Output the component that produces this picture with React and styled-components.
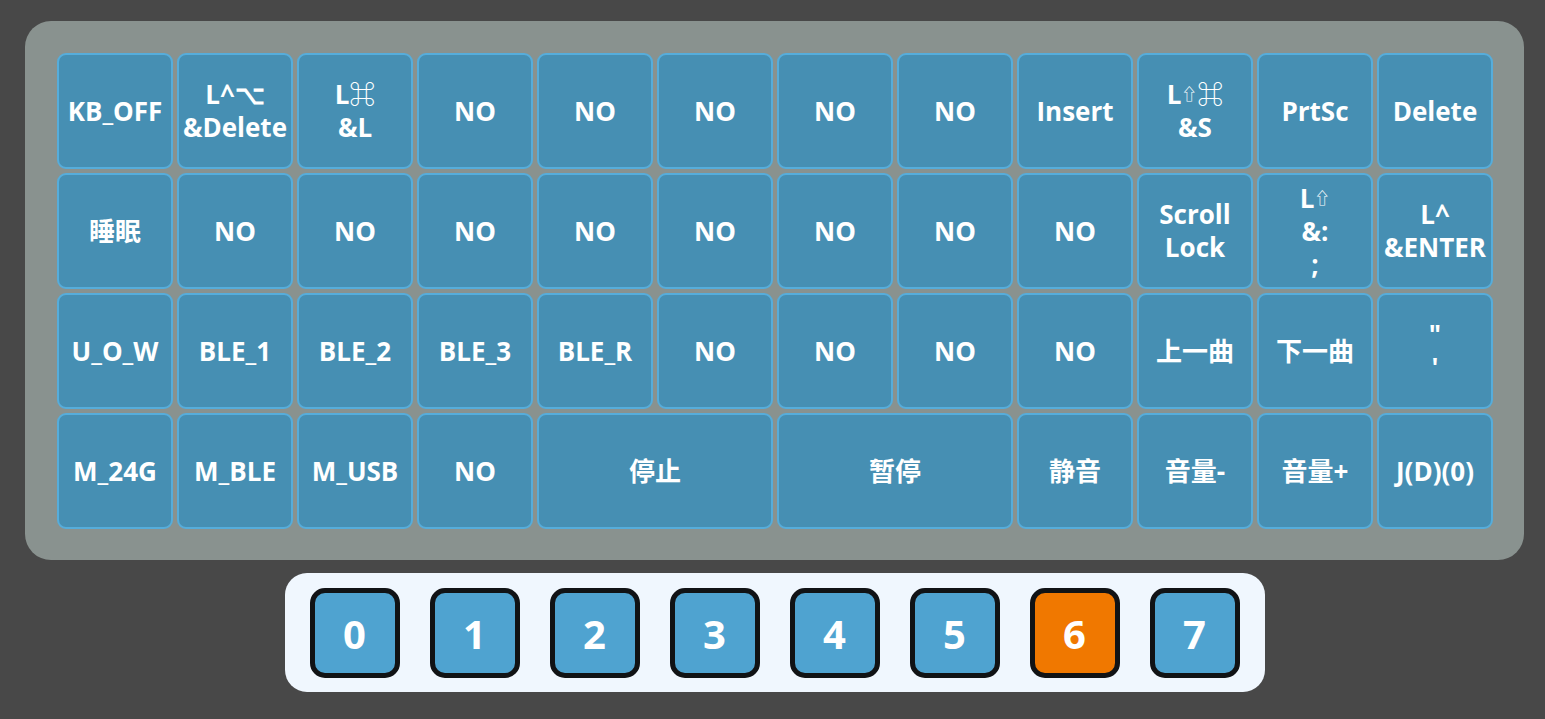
import React from 'react'
import styled, { createGlobalStyle } from 'styled-components'

const keys = [
  ['KB_OFF', 'L^⌥\n&Delete', 'L⌘\n&L', 'NO', 'NO', 'NO', 'NO', 'NO', 'Insert', 'L⇧⌘\n&S', 'PrtSc', 'Delete'],
  ['睡眠', 'NO', 'NO', 'NO', 'NO', 'NO', 'NO', 'NO', 'NO', 'Scroll\nLock', 'L⇧\n&:\n;', 'L^\n&ENTER'],
  ['U_O_W', 'BLE_1', 'BLE_2', 'BLE_3', 'BLE_R', 'NO', 'NO', 'NO', 'NO', '上一曲', '下一曲', '"\n\''],
  ['M_24G', 'M_BLE', 'M_USB', 'NO', ['停止', 2], ['暂停', 2], '静音', '音量-', '音量+', 'J(D)(0)'],
]

const layers = [0, 1, 2, 3, 4, 5, 6, 7]

// the shift arrow shows up smaller than the rest of the label
const renderLine = line =>
  line.split(/(⇧)/).map((part, i) =>
    part === '⇧' ? <Shift key={i}>{part}</Shift> : part
  )

const App = () => {
  const active = 6

  return (
    <>
      <GlobalStyle />
      <Page>
        <Board>
          {keys.flat().map((k, i) => {
            const [label, span] = Array.isArray(k) ? k : [k, 1]
            return (
              <Key key={i} span={span}>
                {label.split('\n').map((line, j) => (
                  <Line key={j}>{renderLine(line)}</Line>
                ))}
              </Key>
            )
          })}
        </Board>
        <LayerBar>
          {layers.map(n => (
            <LayerButton key={n} active={n === active}>{n}</LayerButton>
          ))}
        </LayerBar>
      </Page>
    </>
  )
}

const GlobalStyle = createGlobalStyle`
  body {
    margin: 0;
    background: #484848;
    font-family: "Open Sans", "Noto Sans CJK SC", sans-serif;
  }
`

const Page = styled.div`
  width: 1545px;
  height: 719px;
  padding: 21px 21px 0 25px;
  box-sizing: border-box;
  display: flex;
  flex-direction: column;
  align-items: center;
  gap: 13px;
`

const Board = styled.div`
  width: 1499px;
  box-sizing: border-box;
  padding: 32px 31px 31px 32px;
  background: #89928f;
  border-radius: 26px;
  display: grid;
  grid-template-columns: repeat(12, 116px);
  grid-auto-rows: 116px;
  gap: 4px;
  align-self: flex-start;
`

const Key = styled.div`
  grid-column: span ${({ span }) => span};
  box-sizing: border-box;
  background: #468fb3;
  border: 2px solid #56addb;
  border-radius: 9px;
  display: flex;
  flex-direction: column;
  align-items: center;
  justify-content: center;
  color: #fff;
  font-weight: 700;
  font-size: 26px;
  line-height: 33px;
  text-align: center;
  white-space: nowrap;
`

const Line = styled.span`
  display: block;
`

const Shift = styled.span`
  font-size: 16px;
  font-weight: 400;
  vertical-align: 4px;
`

const LayerBar = styled.div`
  width: 980px;
  box-sizing: border-box;
  padding: 15px 25px 14px;
  background: #f0f7fe;
  border-radius: 22px;
  display: flex;
  gap: 30px;
`

const LayerButton = styled.div`
  width: 90px;
  height: 90px;
  box-sizing: border-box;
  border: 5px solid #111315;
  border-radius: 15px;
  background: ${({ active }) => (active ? '#f07800' : '#4fa3d0')};
  color: #fff;
  font-weight: 700;
  font-size: 40px;
  display: flex;
  align-items: center;
  justify-content: center;
`

export default App
